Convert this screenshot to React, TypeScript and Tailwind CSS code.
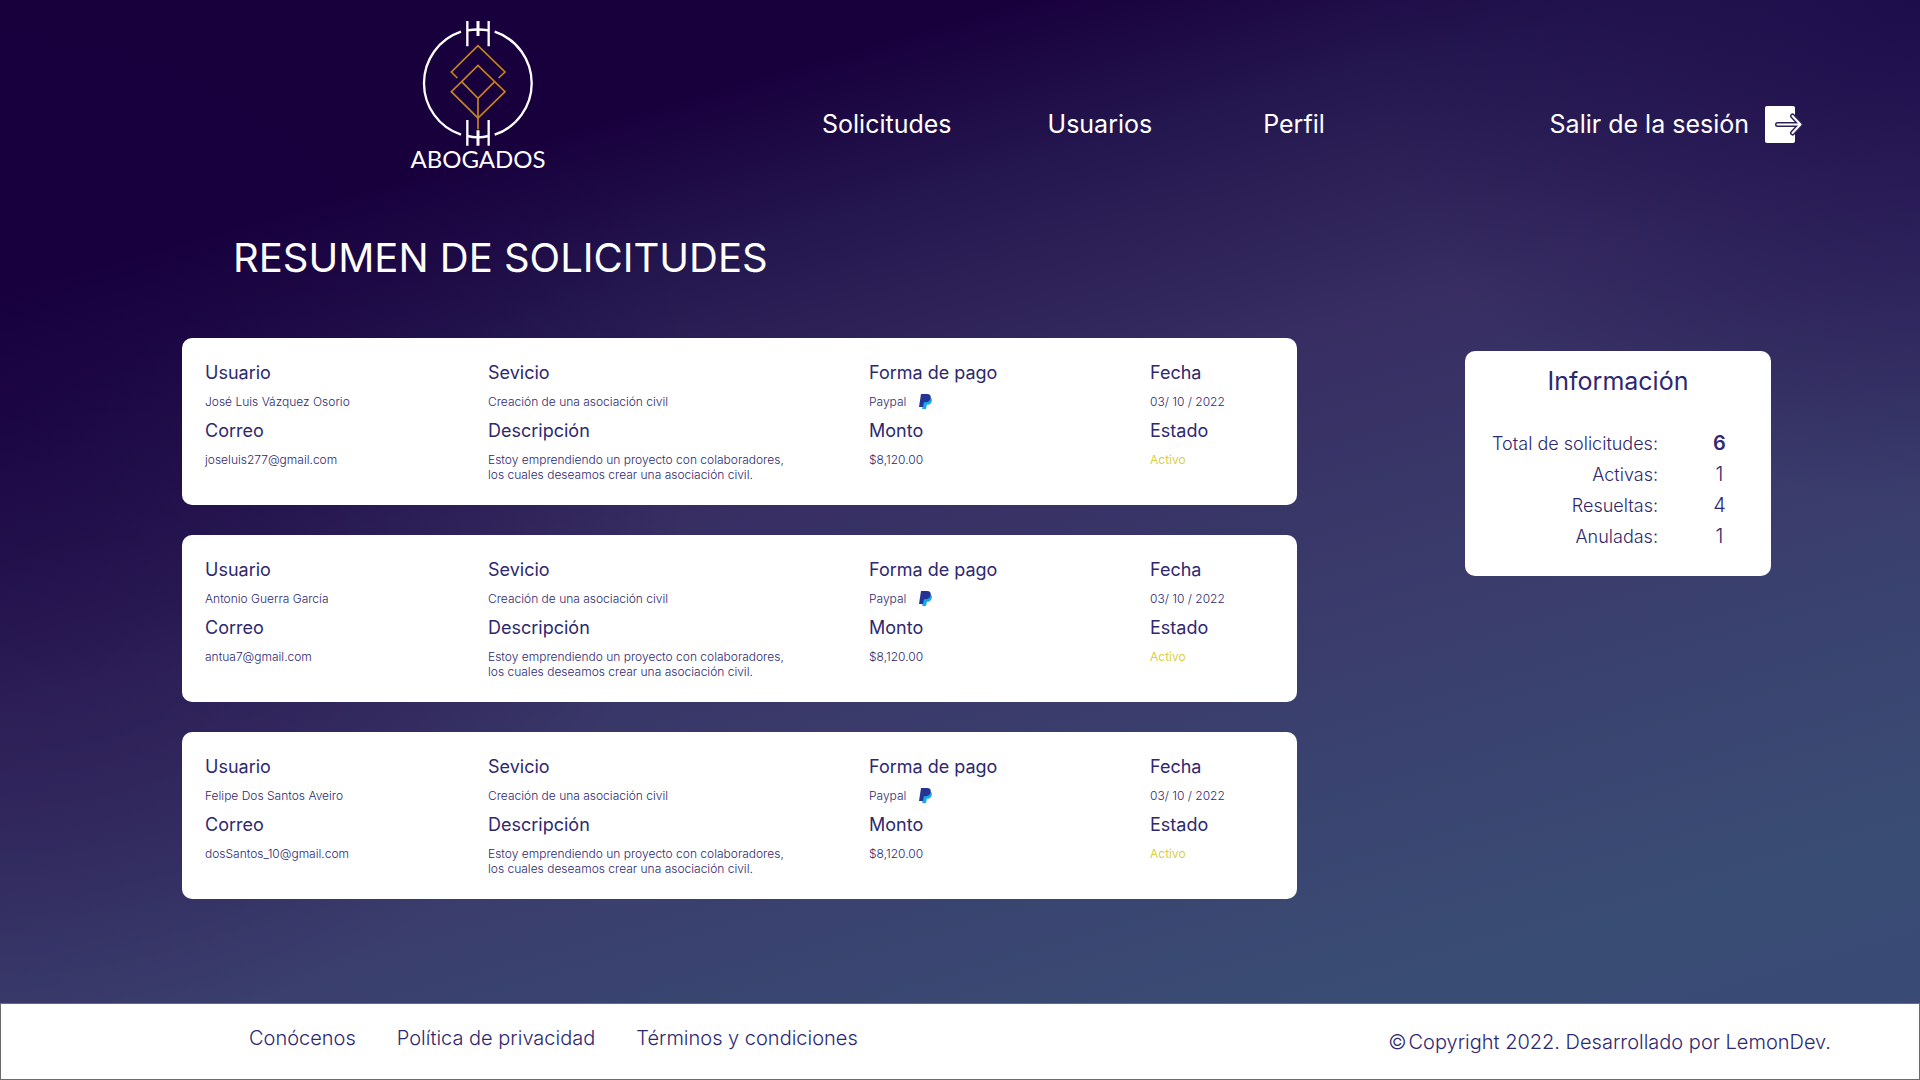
import React from "react";

type Request = {
  user: string;
  email: string;
};

const requests: Request[] = [
  { user: "José Luis Vázquez Osorio", email: "joseluis277@gmail.com" },
  { user: "Antonio Guerra García", email: "antua7@gmail.com" },
  { user: "Felipe Dos Santos Aveiro", email: "dosSantos_10@gmail.com" },
];

const totals = [
  { label: "Total de solicitudes:", value: 6, strong: true },
  { label: "Activas:", value: 1, strong: false },
  { label: "Resueltas:", value: 4, strong: false },
  { label: "Anuladas:", value: 1, strong: false },
];

function Logo() {
  return (
    <a href="#" className="flex w-[140px] flex-col items-center text-white">
      <svg viewBox="95 60 342 378" className="h-[126px] w-[114px]" fill="none" aria-hidden="true">
        <g stroke="#ffffff">
          <path d="M215 95 A163 163 0 0 0 215 404" strokeWidth="7" />
          <path d="M316 95 A163 163 0 0 1 316 404" strokeWidth="7" />
          <path d="M234 63V139M298 63V139M234 360V437M298 360V437" strokeWidth="7" />
          <path d="M266 63V108M266 391V437" strokeWidth="9" />
          <path d="M234 91Q266 86 298 91M234 408Q266 416 298 408" strokeWidth="7" />
        </g>
        <g stroke="#c8821e" strokeWidth="5">
          <path d="M204 234L186 216L266 137L347 216L328 234" />
          <path d="M217 245L266 196L347 275L266 354L186 275Z" />
          <path d="M217 245L266 295L316 245M266 295V388" />
        </g>
      </svg>
      <span className="font-[Lato] text-2xl leading-[26px]">ABOGADOS</span>
    </a>
  );
}

function ExitIcon() {
  return (
    <svg viewBox="0 0 38 37" className="h-[37px] w-[38px]" fill="none" aria-hidden="true">
      <rect width="30" height="37" rx="2" fill="#ffffff" />
      <g strokeLinecap="round" strokeLinejoin="round">
        <path d="M12.500 18.500H34M27.500 10L35.500 18.500L27.500 27" stroke="#2d2259" strokeWidth="5" />
        <path d="M12.500 18.500H34M27.500 10L35.500 18.500L27.500 27" stroke="#ffffff" strokeWidth="2" />
      </g>
    </svg>
  );
}

function PaypalIcon() {
  return (
    <svg viewBox="0 0 13 15" className="h-[15px] w-[13px]" aria-hidden="true">
      <path d="M11.500 3.500C13 4.500 13.200 6.200 12.500 7.900C11.700 9.900 10 10.700 7.900 10.700L7 15H3.200L4.500 8Z" fill="#19a7f0" />
      <path d="M2 0H8C10.700 0 12.200 1.500 11.700 4C11.200 7 9 8.300 6.300 8.300H5L4 13H0Z" fill="#253494" />
    </svg>
  );
}

function Field({ label, children }: { label: string; children: React.ReactNode }) {
  return (
    <div>
      <dt className="text-lg leading-[22px]">{label}</dt>
      <dd className="mt-2.5 text-xs leading-[15px] font-light">{children}</dd>
    </div>
  );
}

function RequestCard({ request }: { request: Request }) {
  return (
    <article className="rounded-[10px] bg-white px-[23px] pt-6 pb-[23px] text-[#2e2870]">
      <dl className="grid grid-cols-[283fr_381fr_281fr_124fr] gap-y-[11px]">
        <Field label="Usuario">{request.user}</Field>
        <Field label="Sevicio">Creación de una asociación civil</Field>
        <Field label="Forma de pago">
          <span className="flex items-center gap-[13px]">
            Paypal
            <PaypalIcon />
          </span>
        </Field>
        <Field label="Fecha">03/ 10 / 2022</Field>
        <Field label="Correo">{request.email}</Field>
        <Field label="Descripción">
          Estoy emprendiendo un proyecto con colaboradores,
          <br />
          los cuales deseamos crear una asociación civil.
        </Field>
        <Field label="Monto">$8,120.00</Field>
        <Field label="Estado">
          <span className="font-normal text-[#d9cf3f]">Activo</span>
        </Field>
      </dl>
    </article>
  );
}

export default function App() {
  return (
    <div className="flex min-h-screen flex-col bg-[radial-gradient(ellipse_560px_500px_at_100%_0%,rgba(26,8,72,0.800),rgba(26,8,72,0)),radial-gradient(ellipse_700px_640px_at_0%_38%,rgba(24,0,64,0.650),rgba(24,0,64,0)),linear-gradient(164deg,#18003d_18%,#251850_29%,#372d62_43%,#3a3c6c_62%,#394d74_86%,#394874_100%)] font-[Inter,sans-serif]">
      <header className="flex pt-5 pr-[117px] pl-[408px] text-[25px] leading-[30px] text-white">
        <Logo />
        <nav className="flex flex-1 items-start pt-[89px] pl-[274px]">
          <a href="#">Solicitudes</a>
          <a href="#" className="ml-24">Usuarios</a>
          <a href="#" className="ml-[111px]">Perfil</a>
          <button type="button" className="ml-auto flex h-[30px] items-center gap-4">
            Salir de la sesión
            <ExitIcon />
          </button>
        </nav>
      </header>

      <main className="flex-1">
        <h1 className="mt-[62px] pl-[233px] text-[40px] leading-[48px] text-white">RESUMEN DE SOLICITUDES</h1>
        <div className="mt-14 flex items-start gap-[168px] pr-[149px] pl-[182px]">
          <section className="flex flex-1 flex-col gap-[30px]">
            {requests.map((request) => (
              <RequestCard key={request.email} request={request} />
            ))}
          </section>
          <aside className="mt-[13px] w-[306px] rounded-[10px] bg-white pt-[15px] pb-6 text-[#2e2870]">
            <h2 className="text-center text-[25px] leading-[30px]">Información</h2>
            <dl className="mt-8 grid grid-cols-[193px_1fr] text-lg leading-[31px] font-light">
              {totals.map((total) => (
                <React.Fragment key={total.label}>
                  <dt className="text-right">{total.label}</dt>
                  <dd className={total.strong ? "pl-2.5 text-center text-xl leading-[31px] font-semibold" : "pl-2.5 text-center text-xl leading-[31px]"}>
                    {total.value}
                  </dd>
                </React.Fragment>
              ))}
            </dl>
          </aside>
        </div>
      </main>

      <footer className="flex h-[77px] items-start justify-between border border-[#6b6b6b] bg-white pr-[88px] pl-[248px] text-xl leading-6 font-light text-[#2e2870]">
        <nav className="flex gap-[41px] pt-[22px]">
          <a href="#">Conócenos</a>
          <a href="#">Política de privacidad</a>
          <a href="#">Términos y condiciones</a>
        </nav>
        <p className="flex gap-0.5 pt-[26px]">
          <span>©</span>
          <span>Copyright 2022. Desarrollado por LemonDev.</span>
        </p>
      </footer>
    </div>
  );
}
